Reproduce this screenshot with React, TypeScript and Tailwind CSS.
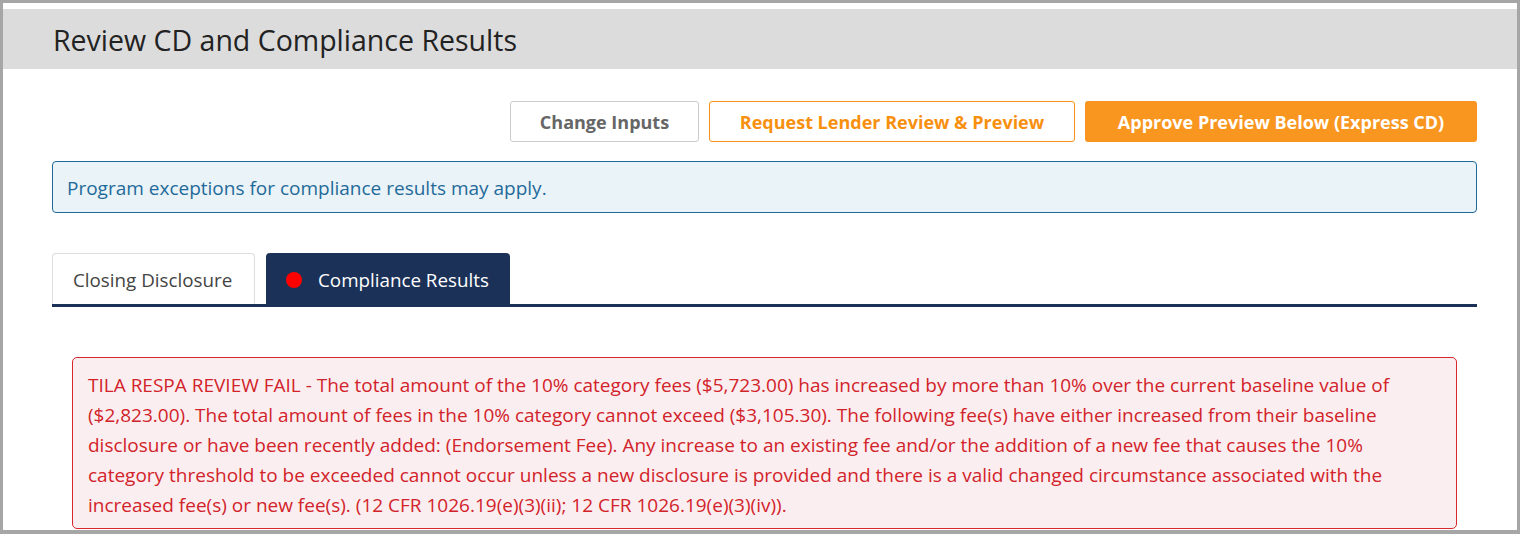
import React from "react";

const font = { fontFamily: '"Open Sans", "Noto Sans", sans-serif' };

export default function App() {
  return (
    <div
      className="w-[1520px] h-[534px] border-t-[3px] border-l-[3px] border-r-[3px] border-b-4 border-[#a6a6a6] bg-white pt-[6px] overflow-hidden"
      style={font}
    >
      <div className="h-[60px] bg-[#dcdcdc] flex items-center pl-[50px]">
        <h1 className="text-[28.5px] text-[#222] leading-none pt-[3px]">
          Review CD and Compliance Results
        </h1>
      </div>

      <div className="pl-[49px] pr-[40px]">
        {/* action buttons */}
        <div className="flex justify-end gap-[10px] mt-[32px]">
          <button className="h-[41px] w-[189px] border border-[#cccccc] rounded-[3px] bg-white text-[18px] font-bold text-[#666] pt-[2px]">
            Change Inputs
          </button>
          <button className="h-[41px] w-[366px] border border-[#f7941d] rounded-[3px] bg-white text-[18px] font-bold text-[#f7900f] pt-[2px]">
            Request Lender Review &amp; Preview
          </button>
          <button className="h-[41px] w-[392px] rounded-[3px] bg-[#f99620] text-[18px] font-bold text-white pt-[2px]">
            Approve Preview Below (Express CD)
          </button>
        </div>

        {/* info alert */}
        <div className="mt-[19px] h-[52px] border border-[#1f6a9a] rounded-[4px] bg-[#eaf3f7] flex items-center px-[14px]">
          <span className="text-[19px] text-[#1f6a9a] pt-[2px]">
            Program exceptions for compliance results may apply.
          </span>
        </div>

        {/* tabs */}
        <div className="mt-[40px] flex gap-[11px] border-b-[3px] border-[#1b3157]">
          <div className="h-[51px] w-[203px] border border-b-0 border-[#dddddd] rounded-t-[4px] bg-white flex items-center pl-[20px]">
            <span className="text-[18.8px] text-[#444] pt-[3px]">Closing Disclosure</span>
          </div>
          <div className="h-[51px] w-[244px] rounded-t-[4px] bg-[#1b3157] flex items-center pl-[20px]">
            <span className="w-[16px] h-[16px] rounded-full bg-[#ff0000] mt-[3px]" />
            <span className="ml-[16px] text-[18.8px] text-white pt-[3px]">Compliance Results</span>
          </div>
        </div>

        {/* compliance failure */}
        <div className="mx-[20px] mt-[50px] border border-[#d9262c] rounded-[5px] bg-[#fbeef0] px-[15px] pt-[12px] pb-[8px]">
          <p className="text-[19px] leading-[30px] text-[#d2232a]">
            TILA RESPA REVIEW FAIL - The total amount of the 10% category fees ($5,723.00) has increased by more than
            10% over the current baseline value of ($2,823.00). The total amount of fees in the 10% category cannot
            exceed ($3,105.30). The following fee(s) have either increased from their baseline disclosure or have been
            recently added: (Endorsement Fee). Any increase to an existing fee and/or the addition of a new fee that
            causes the 10% category threshold to be exceeded cannot occur unless a new disclosure is provided and there
            is a valid changed circumstance associated with the increased fee(s) or new fee(s). (12 CFR
            1026.19(e)(3)(ii); 12 CFR 1026.19(e)(3)(iv)).
          </p>
        </div>
      </div>
    </div>
  );
}
